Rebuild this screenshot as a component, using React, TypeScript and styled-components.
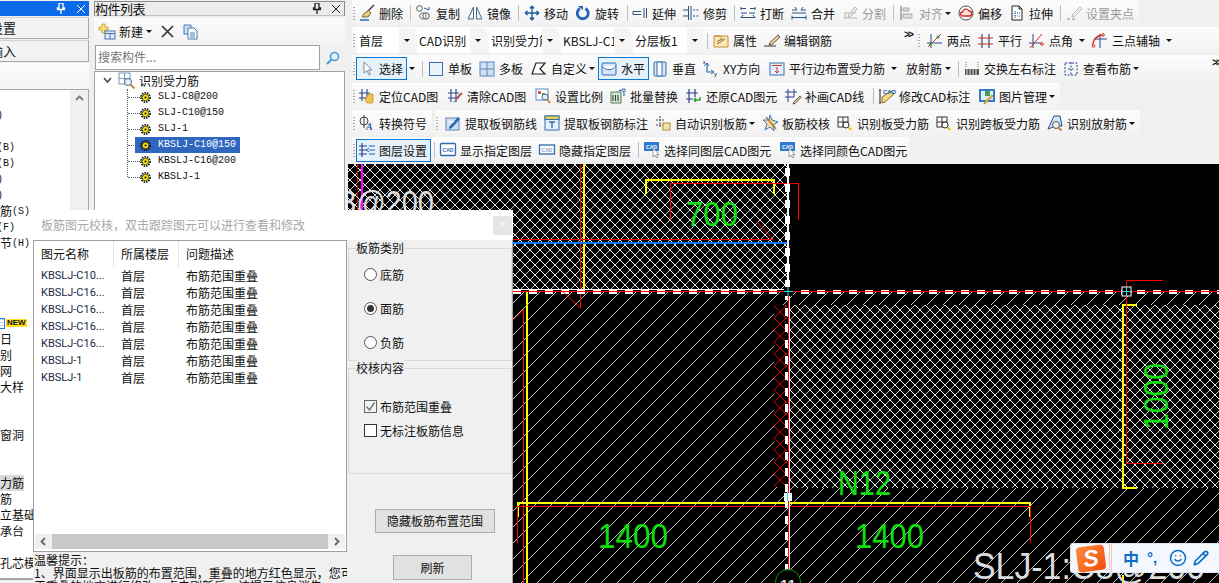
import React from 'react';
import styled, { createGlobalStyle } from 'styled-components';
import { Smile, Pencil } from 'lucide-react';

const Global = createGlobalStyle`
  html, body { margin: 0; padding: 0; background: #f0f0f0; overflow: hidden; }
  body { font-family: "Noto Sans CJK SC", "Noto Sans", sans-serif; font-size: 12px; color: #111; }
  * { box-sizing: border-box; }
`;

const Page = styled.div`
  position: relative; width: 1219px; height: 583px; overflow: hidden;
  display: flex; background: #f0f0f0;
`;

/* ---------- left dock ---------- */
const LeftDock = styled.div`
  width: 89px; height: 580px; margin-right: 5px; flex: none; display: flex; flex-direction: column;
  padding-top: 1px; border-bottom: 1px solid #a0a0a0;
`;
const BlueHead = styled.div`
  height: 15px; background: #0a6ae8; display: flex; align-items: center; justify-content: flex-end;
  gap: 10px; padding-right: 3px; color: #fff; flex: none;
`;
const DockTab = styled.div<{ $shift: number }>`
  height: 22px; margin-top: 1px; border-bottom: 1px solid #a8a8a8; border-right: 1px solid #a8a8a8;
  border-top: 1px solid #d0d0d0; background: #f2f2f2; font-size: 13px; line-height: 20px;
  overflow: hidden; white-space: nowrap; text-indent: ${p => p.$shift}px; flex: none;
`;
const DockStrip = styled.div`
  height: 26px; margin-top: 1px; background: linear-gradient(#fdfdfd, #f4f4f4); flex: none;
`;
const DockBody = styled.div`
  flex: 1; display: flex; background: #fff; border: 1px solid #a8a8a8; border-left: none; overflow: hidden;
`;
const DockRows = styled.div`
  flex: 1; padding-top: 17px; overflow: hidden;
`;
const DockRow = styled.div<{ $hi?: boolean }>`
  height: 16px; line-height: 16px; white-space: nowrap; font-size: 12px; width: fit-content;
  display: flex; align-items: center; background: ${p => (p.$hi ? '#d9d9d9' : 'transparent')};
`;
const Ascii = styled.span`
  font-family: "Liberation Mono", monospace; font-size: 10px; position: relative; top: 1px;
`;
const LeadAscii = styled(Ascii)`
  margin-left: -3px;
`;
const NewBadge = styled.span`
  background: #ffdc1e; color: #111; font: bold 8px/8px "Liberation Sans", sans-serif; padding: 0 1px; margin-left: 1px;
`;
const MiniList = styled.span`
  width: 5px; height: 11px; border: 1px solid #2b7bd6; border-left: none; display: inline-block;
  background: repeating-linear-gradient(#bcd8f5 0 1px, #fff 1px 3px);
`;
const DockScroll = styled.div`
  width: 18px; flex: none; background: #f0f0f0; display: flex; justify-content: center; padding-top: 4px; color: #777;
`;

/* ---------- component list ---------- */
const ListDock = styled.div`
  width: 251px; margin-right: 3px; flex: none; display: flex; flex-direction: column; padding-top: 1px;
`;
const ListHead = styled.div`
  height: 15px; border: 1px solid #8a8a8a; border-bottom-color: #c0c0c0; background: #ececec; display: flex; align-items: center; flex: none;
  font-size: 13px; line-height: 13px; letter-spacing: -0.5px;
`;
const ListTitle = styled.span` flex: 1; `;
const HeadBtns = styled.span`
  display: flex; gap: 9px; padding-right: 3px; color: #222; align-items: center;
`;
const ListTools = styled.div`
  height: 27px; margin-top: 2px; display: flex; align-items: center; background: linear-gradient(#fbfbfb, #f2f2f2); padding-left: 5px; flex: none;
`;
const NewLabel = styled.span` margin-left: 4px; font-size: 12px; `;
const Caret = styled.span<{ $ml?: number }>`
  width: 0; height: 0; flex: none; margin-left: ${p => p.$ml ?? 2}px;
  border-left: 3px solid transparent; border-right: 3px solid transparent; border-top: 3px solid #111;
`;
const BarIconGap = styled.span`
  display: flex; margin-left: 9px;
`;
const SearchRow = styled.div`
  height: 25px; display: flex; flex: none; margin-left: 1px;
`;
const SearchBox = styled.div`
  width: 225px; border: 1px solid #a0a0a0; background: #fff; color: #777; font-size: 12px; line-height: 21px; padding-left: 2px;
`;
const SearchBtn = styled.div`
  flex: 1; display: flex; align-items: center; justify-content: center;
`;
const TreeBox = styled.div`
  flex: 1; background: #fff; border: 1px solid #a0a0a0; margin-top: 1px; overflow: hidden;
`;
const RootRow = styled.div`
  height: 17px; display: flex; align-items: center; padding-left: 7px;
`;
const ExpandChev = styled.svg`
  width: 9px; height: 7px; margin: 0 7px 0 1px; flex: none;
`;
const RootLabel = styled.span` margin-left: 4px; font-size: 12px; `;
const TreeItems = styled.div`
  margin-left: 32px; border-left: 1px dotted #666; height: 88px;
`;
const TreeRow = styled.div`
  height: 16px; display: flex; align-items: center;
`;
const Dots = styled.span`
  width: 12px; border-top: 1px dotted #666; flex: none;
`;
const TreeText = styled.span`
  font-family: "Liberation Mono", monospace; font-size: 10px; height: 16px; line-height: 16px; white-space: nowrap; margin-left: 7px;
`;
const Selected = styled.span`
  display: flex; align-items: center; background: #2f66bf; color: #fff; height: 16px; width: 105px; margin-left: -5px; padding-left: 5px;
`;

/* ---------- toolbars ---------- */
const Main = styled.div`
  flex: 1; min-width: 0; display: flex; flex-direction: column;
`;
const ToolRow = styled.div<{ $h: number }>`
  height: ${p => p.$h}px; padding: 0 0 1px 4px; display: flex; gap: 0; flex: none;
`;
const BarBox = styled.div<{ $w: number; $pl: number; $ml: number }>`
  width: ${p => p.$w}px; margin-left: ${p => p.$ml}px; padding-left: ${p => p.$pl}px; display: flex; align-items: center; flex: none;
  background:
    repeating-linear-gradient(#aaa 0 1px, transparent 1px 3px) 1px center / 2px 13px no-repeat,
    linear-gradient(#fcfcfc, #f1f1f1);
`;
const Tool = styled.div<{ $w: number; $dim?: boolean }>`
  width: ${p => p.$w}px; flex: none; display: flex; align-items: center; white-space: nowrap; font-size: 12px;
  color: ${p => (p.$dim ? '#9a9a9a' : '#111')};
`;
const Face = styled.div<{ $bw?: number }>`
  display: flex; align-items: center; height: 23px; flex: none;
  ${p => (p.$bw ? `width:${p.$bw}px;background:#e5f1fb;box-shadow:inset 0 0 0 1px #0a78d2;` : '')}
`;
const IconBox = styled.span<{ $w: number }>`
  width: ${p => p.$w}px; flex: none; display: flex; justify-content: flex-end; padding-right: 4px; height: 16px;
`;
const Sep = styled.span<{ $w: number }>`
  width: ${p => p.$w}px; flex: none; height: 16px; background: linear-gradient(#bdbdbd, #bdbdbd) left / 1px 100% no-repeat;
`;
const Combo = styled.div<{ $w: number }>`
  width: ${p => p.$w}px; flex: none; display: flex;
`;
const ComboFace = styled.div<{ $box: number }>`
  width: ${p => p.$box}px; height: 25px; background: #fff; display: flex; align-items: center; font-size: 12px; padding-left: 2px; overflow: hidden;
`;
const ComboText = styled.span`
  flex: 1; min-width: 0; white-space: nowrap; overflow: hidden;
`;
const ComboDrop = styled.span`
  width: 16px; flex: none; height: 25px; background: #f4f4f4; display: flex; align-items: center; justify-content: center;
`;
const More = styled.span<{ $w: number }>`
  width: ${p => p.$w}px; flex: none; font: bold 10px/12px "Liberation Mono", monospace; letter-spacing: -2px; align-self: flex-start; padding-top: 3px;
`;

/* ---------- canvas ---------- */
const Canvas = styled.svg`
  display: block; width: 871px; height: 419px; background: #000; flex: none;
`;

/* ---------- dialog ---------- */
const Dialog = styled.div`
  position: absolute; left: 33px; top: 210px; width: 480px; height: 373px; display: flex; flex-direction: column; background: #fff; overflow: hidden;
`;
const DlgTitle = styled.div`
  height: 30px; flex: none; background: #fff; display: flex; align-items: center; padding: 0 1px 2px 8px; color: #a8a8a8; font-size: 12px;
`;
const DlgTitleText = styled.span` flex: 1; `;
const CloseBtn = styled.span`
  width: 19px; height: 19px; margin-top: 2px; background: #e5e5e5; color: #fff; text-align: center; font: 12px/18px "Liberation Sans", sans-serif;
`;
const DlgBody = styled.div`
  flex: 1; min-height: 0; display: flex; background: #f0f0f0;
`;
const DlgLeft = styled.div`
  width: 314px; flex: none; display: flex; flex-direction: column; min-height: 0;
`;
const TableBox = styled.div`
  height: 312px; flex: none; border: 1px solid #a0a0a0; background: #fff; display: flex; flex-direction: column;
`;
const TableArea = styled.div` flex: 1; min-height: 0; `;
const THead = styled.div`
  display: grid; grid-template-columns: 80px 65px 1fr; height: 26px; align-items: stretch;
`;
const TH = styled.div`
  padding-left: 7px; line-height: 26px; font-size: 12px; border-right: 1px solid #e6e6e6;
  &:last-child { border-right: none; }
`;
const TRow = styled.div`
  display: grid; grid-template-columns: 80px 65px 1fr; height: 17px; align-items: center; font-size: 12px;
`;
const TName = styled.div`
  padding-left: 7px; font: 11px/17px "Roboto", "Liberation Sans", sans-serif; color: #1b2a44; white-space: nowrap; overflow: hidden;
`;
const TCell = styled.div` padding-left: 7px; line-height: 17px; white-space: nowrap; `;
const HScroll = styled.div`
  height: 15px; margin: 0 1px 2px 1px; display: flex; background: #f0f0f0; align-items: stretch; flex: none;
`;
const ScrollArrow = styled.span`
  width: 17px; flex: none; display: flex; align-items: center; justify-content: center; color: #666;
`;
const ScrollThumb = styled.span` flex: 1; background: #c8c8c8; `;
const Tips = styled.div`
  flex: 1; min-height: 0; overflow: hidden; padding: 1px 0 0 1px; font-size: 12px; line-height: 13px; white-space: nowrap; background: #f0f0f0;
`;
const DlgRight = styled.div`
  flex: 1; padding: 8px 0 0 1px; border-right: 1px solid #a6a6a6; display: flex; flex-direction: column; min-width: 0;
`;
const Group = styled.div<{ $h: number; $mt?: number }>`
  height: ${p => p.$h}px; margin-top: ${p => p.$mt ?? 0}px; border: 1px solid #d9d9d9; flex: none;
`;
const Legend = styled.div`
  width: fit-content; margin: -9px 0 0 7px; height: 16px; line-height: 16px; background: #f0f0f0; font-size: 12px;
`;
const RadioList = styled.div`
  display: flex; flex-direction: column; gap: 17px; padding: 10px 0 0 15px;
`;
const CheckList = styled.div`
  display: flex; flex-direction: column; gap: 7px; padding: 22px 0 0 15px;
`;
const Opt = styled.label`
  display: flex; align-items: center; gap: 3px; height: 17px; font-size: 12px;
`;
const Radio = styled.span<{ $on?: boolean }>`
  width: 13px; height: 13px; border-radius: 50%; border: 1px solid #555; background: #fff; display: flex; align-items: center; justify-content: center; flex: none;
  &::after { content: ''; width: 7px; height: 7px; border-radius: 50%; background: ${p => (p.$on ? '#333' : 'transparent')}; }
`;
const Check = styled.span<{ $on?: boolean }>`
  width: 13px; height: 13px; border: 1px solid ${p => (p.$on ? '#666' : '#333')}; background: ${p => (p.$on ? '#f4f4f4' : '#fff')}; display: flex; align-items: center; justify-content: center; flex: none;
`;
const PushBtn = styled.div<{ $w: number; $h: number; $ml: number; $mt: number }>`
  width: ${p => p.$w}px; height: ${p => p.$h}px; margin: ${p => p.$mt}px 0 0 ${p => p.$ml}px; flex: none;
  background: #e1e1e1; border: 1px solid #adadad; text-align: center; line-height: ${p => p.$h - 2}px; font-size: 12px;
`;

/* ---------- IME ---------- */
const Ime = styled.div`
  position: absolute; left: 1070px; top: 543px; right: 0; height: 30px; background: #f4f8fe; border: 1px solid #d8e4f2; border-right: none;
  border-radius: 3px 0 0 3px; display: flex; align-items: center; color: #0a6fc4;
`;
const ImeLogo = styled.span`
  width: 28px; height: 25px; margin-left: 6px; background: linear-gradient(135deg, #ff8a3a, #f04e12); border-radius: 4px; transform: rotate(-7deg);
  color: #fff; font: italic bold 23px/25px "Liberation Sans", sans-serif; text-align: center; flex: none;
`;
const ImeRule = styled.span` width: 3px; height: 28px; margin-left: 4px; border-left: 1px solid #f3c9b6; border-right: 1px solid #f3c9b6; flex: none; `;
const ImeZh = styled.span` margin-left: 11px; font-size: 16px; font-weight: 700; line-height: 28px; flex: none; `;
const ImePunct = styled.span` margin-left: 8px; font: bold 15px/22px "Liberation Sans", sans-serif; width: 22px; flex: none; `;
const ImeIcon = styled.span` display: flex; width: 24px; flex: none; `;

/* ---------- icons ---------- */
const Svg = styled.svg` width: 16px; height: 16px; flex: none; display: block; overflow: visible; `;
const cadLabel = (x: number, y: number, c: string) => (
  <text x={x} y={y} fontSize="6" fontWeight="700" fill={c} fontFamily="Liberation Sans" textLength="11" lengthAdjust="spacingAndGlyphs">CAD</text>
);
const ICONS: Record<string, React.ReactNode> = {
  broom: <><path d="M15 0 8 7" stroke="#3d3d50" strokeWidth="1.5" /><path d="M9.5 5.5l2.5 2.5-3 4H3l2-3.500z" fill="#e6cd7d" stroke="#7d6a3c" /><path d="M1 15h9" stroke="#2b6cb8" strokeWidth="1.5" /></>,
  copy: <><circle cx="3.500" cy="3.500" r="2.800" fill="#fff" stroke="#555" /><circle cx="10" cy="11" r="3.200" fill="#fff" stroke="#555" /><circle cx="7" cy="11" r="3.200" fill="none" stroke="#777" /><path d="M8 3l5 2M13 5V2" stroke="#3a6aa8" fill="none" /></>,
  mirror: <><path d="M6.500 2 1 14h5.500zM9.500 2 15 14H9.500z" fill="#eef3fa" stroke="#4a6a8c" /></>,
  move: <path d="M8 1v14M1 8h14M8 1 6 3.500M8 1l2 2.500M8 15l-2-2.500M8 15l2-2.500M1 8l2.500-2M1 8l2.500 2M15 8l-2.500-2M15 8l-2.500 2" stroke="#1f5b9e" strokeWidth="1.400" fill="none" />,
  rotate: <><path d="M5 3.500a5.500 5.500 0 1 0 5.500 0" stroke="#2264bc" strokeWidth="2.800" fill="none" /><path d="M3 1h5v4z" fill="#2264bc" /></>,
  extend: <path d="M1 6.500h8M1 9.500h8M1 6.500v3M12 3v10M14.500 3v10" stroke="#2c4f80" fill="none" />,
  trim: <path d="M5.500 1v14M8 1v14M0 5h5.500M0 11h5.500M10 5h2M13.500 5h2M10 11h2M13.500 11h2" stroke="#2c4f80" fill="none" />,
  brk: <path d="M1 5V2M1 3.500h5M10 3.500h5M15 5V2M1 8h6M9 8h6M1 12.500h14M3 10l-2 2.500M13 10l2 2.500" stroke="#27527f" fill="none" />,
  merge: <path d="M1 5h5M10 5h5M4 2l2 3M12 2l-2 3M1 8h14M1 12.500h14M1 10.500v4M15 10.500v4" stroke="#27527f" fill="none" />,
  split: <path d="M1 13h14M2 8h12M3 8v5M13 2 7 9l-1 3 3-1 6-7z" stroke="#b8b8b8" fill="#eee" />,
  align: <><path d="M2 1v14" stroke="#999" strokeWidth="1.500" /><path d="M4 3h6v3H4zM4 9h9v4H4z" fill="#ddd" stroke="#aaa" /></>,
  offset: <><circle cx="8" cy="8" r="7" fill="#fff" stroke="#4a4a4a" /><path d="M4.500 11a2 2 0 0 1 0-4 3.500 3.500 0 0 1 6.500-1 2.500 2.500 0 0 1 .5 5z" fill="#fbe2dc" stroke="#d42a1c" strokeWidth="1.300" /></>,
  stretch: <><path d="M3 1h7l3 3v11H3z" fill="#fff" stroke="#222" /><path d="M10 1v3h3" fill="none" stroke="#222" /><path d="M6 6v7M6 8h5M6 11h5" stroke="#1f5b9e" strokeDasharray="1 1" /></>,
  gripp: <><path d="M14 2 7 9l-1 3 3-1 7-7z" fill="#eee" stroke="#bbb" /><path d="M1 14h3M6 14h3" stroke="#aaa" strokeWidth="1.500" /></>,
  attr: <><path d="M1 3h14v11H1z" fill="#fbe8b4" stroke="#c88a3a" /><path d="M1 3h6l1 2" fill="none" stroke="#c88a3a" /><path d="M4 11l8-5M4 8.500l6-3" stroke="#7a6a40" /></>,
  edit: <><path d="M14 2 6 9.500l-1 2.500 3-.5 8-7.500z" fill="#f2d98a" stroke="#555" /><path d="M0 13h12" stroke="#333" /></>,
  two: <><path d="M4 1v14M0 10h15" stroke="#274b8a" /><path d="M1 14 14 1" stroke="#d42a1c" /><circle cx="3.500" cy="11" r="1.500" fill="#3a9a3a" /><circle cx="11" cy="4" r="1.500" fill="#3a9a3a" /></>,
  par: <><path d="M4 1v14M11 1v14" stroke="#274b8a" strokeWidth="1.200" /><path d="M0 5h15M0 11h15" stroke="#d42a1c" strokeWidth="1.200" /></>,
  pang: <><path d="M4 1v14M0 10h12" stroke="#274b8a" /><path d="M1 15 13 1" stroke="#d42a1c" /><circle cx="13" cy="11" r="1.300" fill="none" stroke="#d42a1c" /></>,
  arc: <><path d="M8 1v14M2 6h13" stroke="#274b8a" /><path d="M1 13A10 10 0 0 1 11 2" fill="none" stroke="#d42a1c" strokeWidth="1.300" /><circle cx="1.500" cy="13" r="1.300" fill="#fff" stroke="#d42a1c" /><circle cx="11" cy="2" r="1.300" fill="#fff" stroke="#d42a1c" /></>,
  cursor: <path d="M5 1v11l3-2.500 2 4.500 1.500-.8-2-4.300h3.500z" fill="#fff" stroke="#8a8a96" />,
  single: <rect x="1.500" y="1.500" width="13" height="13" fill="#eaf2fb" stroke="#3a6fb0" />,
  multi: <><rect x="1" y="1" width="14" height="14" fill="#cfe0f4" stroke="#5a88bc" /><path d="M8 1v14M1 8h14" stroke="#5a88bc" /></>,
  custom: <path d="M1 13 5 2h9L9 8l5 5z" fill="#fff" stroke="#222" strokeWidth="1.200" />,
  horiz: <><rect x="1" y="2" width="14" height="12" rx="1" fill="#d6e6f6" stroke="#2f6cb0" /><path d="M1 5c4 5 10 5 14 0" fill="#fff" stroke="#2f6cb0" /></>,
  vert: <><rect x="2" y="1" width="12" height="14" rx="1" fill="#d6e6f6" stroke="#2f6cb0" /><path d="M5 1h5v14H5z" fill="#fff" stroke="#2f6cb0" /></>,
  xy: <><path d="M4 2v9h6" stroke="#2f6cb0" fill="none" strokeWidth="1.200" /><path d="M1 5l3-3 2 3M8 9l3 2-3 2" stroke="#2f6cb0" fill="none" /><text x="11" y="15" fontSize="6" fontFamily="Liberation Sans">y</text><text x="0" y="3" fontSize="5" fontFamily="Liberation Sans">x</text></>,
  pedge: <><rect x="1" y="2" width="14" height="12" fill="#e6f0fa" stroke="#3a6fb0" /><path d="M3 4.500h10M8 6v6M6 10l2 2 2-2" stroke="#c03a2a" fill="none" /></>,
  swap: <><path d="M1 8h14v6H1z" fill="#555" /><path d="M3 8v6M6 8v6M9 8v6M12 8v6" stroke="#ddd" /><path d="M2 6V1M14 6V1" stroke="#777" strokeDasharray="1 1" /></>,
  view: <path d="M2 2h12v12H2z M8 1v14 M5 8h6" stroke="#1f3c8a" fill="none" strokeDasharray="2 1.500" />,
  locate: <><path d="M3 1v12M8 1v12M0 5h11M0 10h11" stroke="#27428a" strokeWidth="1.100" /><path d="M9 6h5v8a1 1 0 0 1-1 1H8l-2-3z" fill="#f2c24a" stroke="#a07a20" strokeWidth=".6" /></>,
  clear: <><path d="M4 1v13M9 1v13M1 5h11M1 10h11" stroke="#27428a" strokeWidth="1.100" /><path d="M15 5 9 11" stroke="#c05050" strokeWidth="2" /><path d="M9 11l-3 4 4-2z" fill="#777" /></>,
  scale: <><rect x="1" y="1" width="12" height="11" fill="#fff" stroke="#5a88bc" /><rect x="3" y="3" width="3" height="3" fill="#d9544a" /><rect x="7" y="5" width="3" height="3" fill="#4aa04a" /><circle cx="10" cy="9" r="3" fill="#dfeefb" stroke="#4a6a8c" /><path d="M12 11l3 4" stroke="#c88a3a" strokeWidth="2" /></>,
  batch: <><path d="M1 4h10v11H1z" fill="#cfe6cf" stroke="#5a7a5a" /><path d="M3 7v6M5.500 7v6M8 7v6" stroke="#333" /><path d="M9 3a3 3 0 0 1 5 2v3" fill="none" stroke="#2f6cb0" strokeWidth="1.200" /><path d="M12 1h3v3" stroke="#2f6cb0" fill="none" /></>,
  restore: <><path d="M3 1v14M9 1v8M0 5h12M0 11h7" stroke="#27428a" strokeWidth="1.200" /><path d="M8 12h6v-3M8 12l2-2M8 12l2 2" stroke="#2a9a3a" fill="none" strokeWidth="1.400" /></>,
  draw: <><path d="M3 1v13M9 1v8M0 4h12M0 9h9" stroke="#27428a" /><path d="M15 8 9 14l-1 2 2-.5 6-6z" fill="#f2d98a" stroke="#555" /></>,
  modcad: <><path d="M1 2v13M0 2h2M0 15h2" stroke="#222" /><path d="M3 9l9-6 3 3-9 8-3 1z" fill="#f2d98a" stroke="#8a6a20" /><text x="4" y="6" fontSize="6" fontWeight="700" fill="#1f5bb0" fontFamily="Liberation Sans">CAD</text></>,
  image: <><rect x="0" y="1" width="16" height="13" fill="#3a78c8" /><rect x="2" y="3" width="12" height="9" fill="#dcefff" /><path d="M6 3h5v5H6z" fill="#4aa04a" /><path d="M14 8 7 15l-2 1 1-3 7-6z" fill="#f2c24a" stroke="#8a6a20" strokeWidth=".6" /></>,
  symbol: <><circle cx="5" cy="6" r="4" fill="none" stroke="#444" /><path d="M5 0v13" stroke="#444" /><text x="7" y="15" fontSize="10" fontWeight="700" fontStyle="italic" fill="#2f5fb0" fontFamily="Liberation Serif">A</text></>,
  pickline: <><rect x="1" y="3" width="13" height="12" fill="#cfe0f4" stroke="#5a88bc" /><path d="M4 12 13 2l2 2-8 9-3 1z" fill="#2f6cb0" /><path d="M3 7h6" stroke="#fff" /></>,
  picklabel: <><rect x="1" y="1" width="14" height="14" fill="#e6f0fa" stroke="#2f6cb0" /><rect x="1" y="1" width="14" height="3.500" fill="#f2d24a" stroke="#2f6cb0" /><path d="M5 7h6M8 7v6" stroke="#2f6cb0" strokeWidth="1.400" /></>,
  auto: <><path d="M1 5h8M1 10h8M5 1v12" stroke="#444" strokeDasharray="2 1" /><rect x="8" y="8" width="7" height="7" fill="#f3e3b0" stroke="#b08a30" /></>,
  star: <><path d="M8 0l2 5 6 2-5 3 1 6-4-4-5 3 2-6-4-4 6 0z" fill="#f6dd9a" stroke="#3a78c8" /><path d="M4 2l10 12" stroke="#b07a30" strokeWidth="1.500" /></>,
  recog: <><rect x="1" y="2" width="10" height="10" fill="#fff" stroke="#333" /><path d="M6 2v10M1 7h10" stroke="#333" /><circle cx="9" cy="10" r="3" fill="#fff" stroke="#333" /><path d="M11.500 12.500l3 2.500" stroke="#e0c020" strokeWidth="2" /></>,
  radial: <><path d="M1 14 7 1h6l2 10H9z" fill="#d6e6f6" stroke="#274b8a" /><circle cx="9" cy="10" r="3.500" fill="#eee" stroke="#555" /><path d="M11.500 12.500l3 3" stroke="#c88a3a" strokeWidth="2" /></>,
  layer: <><path d="M3 1v14M0 4h8M0 8h8M0 12h8" stroke="#27428a" strokeWidth="1.200" /><path d="M10 4h6M10 8h6M10 12h6M7 8l3-2M7 8l3 2" stroke="#1f5bb0" fill="none" /></>,
  cad: <><rect x=".5" y="1.500" width="15" height="12" rx="1" fill="#fff" stroke="#2f6cb0" strokeWidth="1.300" />{cadLabel(2.500, 10, '#2f6cb0')}</>,
  cad2: <><rect x=".5" y="3" width="15" height="9" fill="#fff" stroke="#2f6cb0" strokeWidth="1.300" />{cadLabel(2.500, 9.500, '#8aa4c4')}</>,
  cadsel: <><rect x="0" y="0" width="15" height="9" fill="#2f7ad0" />{cadLabel(2, 6.800, '#fff')}<path d="M9 6v9l2-2 1.500 3 1.500-.8-1.500-2.700h2.500z" fill="#fff" stroke="#777" strokeWidth=".7" /></>,
  gear: <><circle cx="5.500" cy="5.500" r="4.600" fill="none" stroke="#111" strokeWidth="1.700" strokeDasharray="1.500 1" /><circle cx="5.500" cy="5.500" r="3.300" fill="#ffe600" stroke="#111" strokeWidth=".7" /><circle cx="5.500" cy="5.500" r="1.100" fill="#111" /></>,
};
const Icon = ({ n }: { n: string }) => <Svg viewBox="0 0 16 16">{ICONS[n]}</Svg>;
const TreeIcon = styled.svg` width: 11px; height: 11px; flex: none; display: block; `;

/* ---------- data ---------- */
type Item = {
  s: number; tx?: number; icon?: string; label?: string; dim?: boolean; caret?: number;
  sep?: boolean; combo?: number; more?: boolean; bw?: number;
};
const T = (tx: number, icon: string, label: string, o: Partial<Item> = {}): Item => ({ s: tx - 20, tx, icon, label, ...o });
const Sp = (s: number): Item => ({ s, sep: true });
const C = (s: number, combo: number, label: string): Item => ({ s, combo, label });
const M = (s: number): Item => ({ s, more: true });

type BarDef = { x: number; end: number; items: Item[] };
const ROWS: { h: number; bars: BarDef[] }[] = [
  { h: 27, bars: [{ x: 352, end: 1139, items: [
    T(379, 'broom', '删除'), Sp(410), T(436, 'copy', '复制'), T(487, 'mirror', '镜像'), Sp(518), T(544, 'move', '移动'), T(595, 'rotate', '旋转'), Sp(627),
    T(652, 'extend', '延伸'), T(703, 'trim', '修剪'), Sp(734), T(760, 'brk', '打断'), T(811, 'merge', '合并'), T(862, 'split', '分割', { dim: true }), Sp(893),
    T(919, 'align', '对齐', { dim: true, caret: 2 }), T(978, 'offset', '偏移'), T(1029, 'stretch', '拉伸'), Sp(1060), T(1086, 'gripp', '设置夹点', { dim: true }),
  ] }] },
  { h: 28, bars: [{ x: 352, end: 915, items: [
    C(357, 58, '首层'), C(417, 69, 'CAD识别'), C(489, 69, '识别受力筋'), C(561, 69, 'KBSLJ-C10@150'), C(633, 70, '分层板1'), Sp(707),
    T(733, 'attr', '属性'), T(784, 'edit', '编辑钢筋'), M(904),
  ] }, { x: 917, end: 1219, items: [
    T(947, 'two', '两点'), T(998, 'par', '平行'), T(1049, 'pang', '点角', { caret: 6 }), T(1112, 'arc', '三点辅轴', { caret: 6 }),
  ] }] },
  { h: 28, bars: [{ x: 352, end: 1219, items: [
    T(379, 'cursor', '选择', { s: 356, bw: 51, caret: 2 }), Sp(422), T(448, 'single', '单板'), T(499, 'multi', '多板'), T(551, 'custom', '自定义', { caret: 2 }),
    T(621, 'horiz', '水平', { s: 598, bw: 51 }), T(672, 'vert', '垂直'), T(723, 'xy', 'XY方向'), T(789, 'pedge', '平行边布置受力筋', { caret: 6 }),
    { s: 906, tx: 906, label: '放射筋', caret: 3 }, Sp(958), T(984, 'swap', '交换左右标注'), T(1083, 'view', '查看布筋', { caret: 2 }), M(1212),
  ] }] },
  { h: 27, bars: [{ x: 352, end: 1060, items: [
    T(379, 'locate', '定位CAD图'), T(467, 'clear', '清除CAD图'), T(555, 'scale', '设置比例'), T(630, 'batch', '批量替换'), T(706, 'restore', '还原CAD图元'),
    T(805, 'draw', '补画CAD线'), Sp(873), T(899, 'modcad', '修改CAD标注'), T(999, 'image', '图片管理', { caret: 2 }),
  ] }] },
  { h: 27, bars: [{ x: 352, end: 432, items: [T(379, 'symbol', '转换符号')] }, { x: 435, end: 1140, items: [
    T(465, 'pickline', '提取板钢筋线'), T(564, 'picklabel', '提取板钢筋标注'), T(675, 'auto', '自动识别板筋', { caret: 2 }), T(782, 'star', '板筋校核'),
    T(857, 'recog', '识别板受力筋'), T(956, 'recog', '识别跨板受力筋'), T(1067, 'radial', '识别放射筋', { caret: 2 }),
  ] }] },
  { h: 27, bars: [{ x: 352, end: 909, items: [
    T(379, 'layer', '图层设置', { s: 356, bw: 75 }), Sp(434), T(460, 'cad', '显示指定图层'), T(559, 'cad2', '隐藏指定图层'), Sp(638),
    T(664, 'cadsel', '选择同图层CAD图元'), T(800, 'cadsel', '选择同颜色CAD图元'),
  ] }] },
];

const Bar = ({ def, prevEnd }: { def: BarDef; prevEnd: number }) => (
  <BarBox $w={def.end - def.x} $pl={def.items[0].s - def.x} $ml={def.x - prevEnd}>
    {def.items.map((it, i) => {
      const w = (def.items[i + 1]?.s ?? def.end) - it.s;
      if (it.sep) return <Sep key={i} $w={w} />;
      if (it.more) return <More key={i} $w={w}>&gt;&gt;</More>;
      if (it.combo) return (
        <Combo key={i} $w={w}>
          <ComboFace $box={it.combo}><ComboText>{it.label}</ComboText><ComboDrop><Caret $ml={0} /></ComboDrop></ComboFace>
        </Combo>
      );
      return (
        <Tool key={i} $w={w} $dim={it.dim}>
          <Face $bw={it.bw}>
            {it.icon && <IconBox $w={it.tx! - it.s}><Icon n={it.icon} /></IconBox>}
            <span>{it.label}</span>
          </Face>
          {it.caret !== undefined && <Caret $ml={it.caret} />}
        </Tool>
      );
    })}
  </BarBox>
);

const PinIcon = ({ c = 'currentColor' }: { c?: string }) => (
  <svg width="10" height="11" viewBox="0 0 10 11"><path d="M3 0h4v5h1.500v1.500h-7V5H3zM5 6.500V11" fill="none" stroke={c} strokeWidth="1.300" /></svg>
);
const XIcon = ({ c = 'currentColor' }: { c?: string }) => (
  <svg width="10" height="10" viewBox="0 0 10 10"><path d="M1 1l8 8M9 1l-8 8" stroke={c} /></svg>
);
const Chev = ({ d }: { d: 'up' | 'left' | 'right' }) => (
  <svg width="9" height="9" viewBox="0 0 9 9">
    <path d={d === 'up' ? 'M1 6l3.500-3.500L8 6' : d === 'left' ? 'M6 1 2.500 4.500 6 8' : 'M3 1l3.500 3.500L3 8'} fill="none" stroke="currentColor" strokeWidth="1.800" />
  </svg>
);

const DOCK: (React.ReactNode | null)[] = [
  <LeadAscii>)</LeadAscii>, null, <LeadAscii>(B)</LeadAscii>, <LeadAscii>(B)</LeadAscii>, <LeadAscii>)</LeadAscii>, <LeadAscii>)</LeadAscii>,
  <>筋<Ascii>(S)</Ascii></>, <LeadAscii>(F)</LeadAscii>, <>节<Ascii>(H)</Ascii></>, null, null, null, null,
  <><MiniList /><NewBadge>NEW</NewBadge></>, '日', '别', '网', '大样', null, null, '窗洞', null, null,
  '力筋', '筋', '立基础', '承台', null, '孔芯模',
];
const TREE = ['SLJ-C8@200', 'SLJ-C10@150', 'SLJ-1', 'KBSLJ-C10@150', 'KBSLJ-C16@200', 'KBSLJ-1'];
const NAMES = ['KBSLJ-C10...', 'KBSLJ-C16...', 'KBSLJ-C16...', 'KBSLJ-C16...', 'KBSLJ-C16...', 'KBSLJ-1', 'KBSLJ-1'];
const COMMA = '\uFF0C';
const COLON = '\uFF1A';

const Gear = () => <TreeIcon viewBox="0 0 11 11">{ICONS.gear}</TreeIcon>;

const CadDrawing = () => (
  <Canvas viewBox="348 164 871 419">
    <defs>
      <pattern id="cross" width="10" height="10" patternUnits="userSpaceOnUse">
        <path d="M0 10 10 0" stroke="#c8c8c8" strokeWidth="1" shapeRendering="crispEdges" />
        <path d="M0 0 10 10" stroke="#fff" strokeWidth="1" shapeRendering="crispEdges" />
      </pattern>
      <pattern id="crossRed" width="12" height="12" patternUnits="userSpaceOnUse">
        <path d="M0 12 12 0M0 0 12 12" stroke="#ff0000" strokeWidth=".8" />
      </pattern>
      <pattern id="diag" width="16" height="16" patternUnits="userSpaceOnUse">
        <path d="M0 16 16 0" stroke="#c4c4c4" strokeWidth="1" shapeRendering="crispEdges" />
      </pattern>
    </defs>
    <rect x="348" y="164" width="441" height="126" fill="url(#cross)" />
    <rect x="348" y="292" width="871" height="291" fill="url(#diag)" />
    <rect x="790" y="305" width="429" height="183" fill="#000" />
    <rect x="790" y="305" width="429" height="183" fill="url(#cross)" />
    <rect x="774" y="305" width="13" height="182" fill="#000" />
    <rect x="774" y="305" width="13" height="182" fill="url(#crossRed)" />

    <g fill="none" shapeRendering="crispEdges">
      <path d="M361.500 164v46" stroke="#ff00ff" strokeWidth="2" />
      <path d="M357.500 164v46" stroke="#ff0000" strokeDasharray="5 2" />
      <path d="M584 164v127" stroke="#ffff00" strokeWidth="2" />
      <path d="M580.500 164v144" stroke="#ff0000" />
      <path d="M513 239.500h260" stroke="#ff0000" />
      <path d="M513 243h274" stroke="#0a78ff" strokeWidth="2" />
      <path d="M646 194v-14h128v14" stroke="#ffff00" strokeWidth="2" />
      <path d="M670.500 220v-37h128v37" stroke="#ff0000" />
      <path d="M527 292v291" stroke="#ffff00" strokeWidth="2" />
      <path d="M523.500 310v273" stroke="#ff0000" />
      <path d="M518 517v-14h512v14" stroke="#ffff00" strokeWidth="2" />
      <path d="M517.500 543v-37h513v37" stroke="#ff0000" />
      <path d="M1123 575v8" stroke="#ffff00" strokeWidth="2" />
      <path d="M1137 305h-14v183h14" stroke="#ffff00" strokeWidth="2" />
      <path d="M1163 280.500h-36.500v183h36.500" stroke="#ff0000" />
      <path d="M787.500 164v128" stroke="#fff" strokeWidth="2" />
      <path d="M787 168v124" stroke="#fff" strokeWidth="5" strokeDasharray="8 8" />
      <path d="M513 289.500h275" stroke="#fff" />
      <path d="M513 292h706" stroke="#fff" strokeWidth="4" strokeDasharray="8 8" />
      <path d="M513 291.500h706" stroke="#ff0000" />
      <path d="M789 292v291" stroke="#fff" strokeWidth="1" />
      <path d="M786 292v291" stroke="#fff" strokeWidth="3" strokeDasharray="8 8" />
      <path d="M788 292v291" stroke="#ff0000" />
    </g>
    <path d="M756.500 221.500 773 239M561.500 290.500 580.500 308M513 320l10.500-10" stroke="#ff0000" fill="none" />
    <rect x="784" y="287" width="9" height="9" fill="#000" />
    <path d="M784 291.500h9M788 287v9" stroke="#28e0e0" />
    <rect x="1122" y="287" width="9" height="9" fill="#000" stroke="#fff" />
    <path d="M1122 291.500h9M1126.500 287v9" stroke="#28e0e0" />
    <rect x="784" y="493" width="8" height="8" fill="#fff" />
    <path d="M787.500 493v8" stroke="#28e0e0" />
    <circle cx="788" cy="582" r="12.500" fill="#000" stroke="#0a9a0a" />
    <g fontFamily="Liberation Sans, sans-serif">
      <text x="340" y="214" fontSize="33" fill="#dcdcdc" textLength="94" lengthAdjust="spacingAndGlyphs">3@200</text>
      <g fill="#0ee00e">
        <text x="686" y="226" fontSize="35" textLength="52" lengthAdjust="spacingAndGlyphs">700</text>
        <text x="838" y="495" fontSize="35" textLength="53" lengthAdjust="spacingAndGlyphs">N12</text>
        <text x="598" y="548" fontSize="35" textLength="70" lengthAdjust="spacingAndGlyphs">1400</text>
        <text x="855" y="548" fontSize="35" textLength="69" lengthAdjust="spacingAndGlyphs">1400</text>
        <text transform="translate(1168 430) rotate(-90)" fontSize="35" textLength="67" lengthAdjust="spacingAndGlyphs">1000</text>
      </g>
      <text x="973" y="579" fontSize="36" fill="#dcdcdc" textLength="232" lengthAdjust="spacingAndGlyphs">SLJ-1:C8@200</text>
      <text x="788" y="590" textAnchor="middle" fontSize="15" fontWeight="700" fill="#ddd">11</text>
    </g>
  </Canvas>
);

export default function App() {
  return (
    <Page>
      <Global />
      <LeftDock>
        <BlueHead><PinIcon /><XIcon /></BlueHead>
        <DockTab $shift={-10}>设置</DockTab>
        <DockTab $shift={-10}>输入</DockTab>
        <DockStrip />
        <DockBody>
          <DockRows>
            {DOCK.map((d, i) => <DockRow key={i} $hi={i === 23}>{d}</DockRow>)}
          </DockRows>
          <DockScroll><Chev d="up" /></DockScroll>
        </DockBody>
      </LeftDock>

      <ListDock>
        <ListHead>
          <ListTitle>构件列表</ListTitle>
          <HeadBtns><PinIcon /><XIcon /></HeadBtns>
        </ListHead>
        <ListTools>
          <Svg viewBox="0 0 16 16">
            <path d="M3 0h3v3h3v3H6v3H3V6H0V3h3z" fill="#ffe27a" stroke="#b08a20" strokeWidth=".7" />
            <rect x="6" y="7" width="10" height="8" fill="#dfeaf6" stroke="#4a78b0" />
            <path d="M6 9.500h10M11 9.500V15" stroke="#4a78b0" />
          </Svg>
          <NewLabel>新建</NewLabel>
          <Caret $ml={3} />
          <BarIconGap>
            <svg width="13" height="13" viewBox="0 0 13 13"><path d="M1 1l11 11M12 1 1 12" stroke="#333" strokeWidth="1.700" /></svg>
          </BarIconGap>
          <BarIconGap>
            <Svg viewBox="0 0 16 16">
              <path d="M1 1h7v9H1z" fill="#cfe0f4" stroke="#4a78b0" />
              <path d="M5 4h6l3 3v8H5z" fill="#fff" stroke="#4a78b0" />
              <path d="M7 9h5M7 11h5M7 13h5" stroke="#4a78b0" />
            </Svg>
          </BarIconGap>
        </ListTools>
        <SearchRow>
          <SearchBox>搜索构件...</SearchBox>
          <SearchBtn>
            <svg width="14" height="14" viewBox="0 0 14 14"><circle cx="8.500" cy="5.500" r="4" fill="#e4f2fc" stroke="#4a9ad8" strokeWidth="1.600" /><path d="M5.500 8.500 1 13" stroke="#4a9ad8" strokeWidth="2" /></svg>
          </SearchBtn>
        </SearchRow>
        <TreeBox>
          <RootRow>
            <ExpandChev viewBox="0 0 9 7"><path d="M1 1l3.500 4L8 1" fill="none" stroke="#444" strokeWidth="1.500" /></ExpandChev>
            <Svg viewBox="0 0 16 16">
              <rect x="0" y="0" width="11" height="11" fill="#fff" stroke="#7a9ac0" />
              <path d="M5.500 0v11M0 5.500h11" stroke="#7a9ac0" />
              <circle cx="9" cy="9" r="3.500" fill="#e8f2fc" stroke="#5a6a80" />
              <path d="M11.500 11.500l4 4" stroke="#c88a3a" strokeWidth="2" />
            </Svg>
            <RootLabel>识别受力筋</RootLabel>
          </RootRow>
          <TreeItems>
            {TREE.map((t, i) => (
              <TreeRow key={t}>
                <Dots />
                {i === 3 ? (
                  <Selected><Gear /><TreeText>{t}</TreeText></Selected>
                ) : (
                  <><Gear /><TreeText>{t}</TreeText></>
                )}
              </TreeRow>
            ))}
          </TreeItems>
        </TreeBox>
      </ListDock>

      <Main>
        {ROWS.map((r, i) => (
          <ToolRow key={i} $h={r.h}>
            {r.bars.map((b, j) => <Bar key={j} def={b} prevEnd={j === 0 ? 352 : r.bars[j - 1].end} />)}
          </ToolRow>
        ))}
        <CadDrawing />
      </Main>

      <Dialog>
        <DlgTitle>
          <DlgTitleText>{`板筋图元校核${COMMA}双击跟踪图元可以进行查看和修改`}</DlgTitleText>
          <CloseBtn>×</CloseBtn>
        </DlgTitle>
        <DlgBody>
          <DlgLeft>
            <TableBox>
              <TableArea>
                <THead><TH>图元名称</TH><TH>所属楼层</TH><TH>问题描述</TH></THead>
                {NAMES.map((n, i) => (
                  <TRow key={i}><TName>{n}</TName><TCell>首层</TCell><TCell>布筋范围重叠</TCell></TRow>
                ))}
              </TableArea>
              <HScroll>
                <ScrollArrow><Chev d="left" /></ScrollArrow>
                <ScrollThumb />
                <ScrollArrow><Chev d="right" /></ScrollArrow>
              </HScroll>
            </TableBox>
            <Tips>
              {`温馨提示${COLON}`}<br />
              {`1、界面显示出板筋的布置范围${COMMA}重叠的地方红色显示${COMMA}您可`}<br />
              {`于重叠的地方进行修改${COMMA}点击刷新后${COMMA}该提示信息消失`}
            </Tips>
          </DlgLeft>
          <DlgRight>
            <Group $h={113}>
              <Legend>板筋类别</Legend>
              <RadioList>
                <Opt><Radio />底筋</Opt>
                <Opt><Radio $on />面筋</Opt>
                <Opt><Radio />负筋</Opt>
              </RadioList>
            </Group>
            <Group $h={106} $mt={7}>
              <Legend>校核内容</Legend>
              <CheckList>
                <Opt>
                  <Check $on><svg width="11" height="11" viewBox="0 0 11 11"><path d="M1.500 5.500 4.500 9 9.500 1.500" fill="none" stroke="#777" strokeWidth="1.500" /></svg></Check>
                  布筋范围重叠
                </Opt>
                <Opt><Check />无标注板筋信息</Opt>
              </CheckList>
            </Group>
            <PushBtn $w={120} $h={24} $ml={27} $mt={35}>隐藏板筋布置范围</PushBtn>
            <PushBtn $w={79} $h={25} $ml={45} $mt={22}>刷新</PushBtn>
          </DlgRight>
        </DlgBody>
      </Dialog>

      <Ime>
        <ImeLogo>S</ImeLogo>
        <ImeRule />
        <ImeZh>中</ImeZh>
        <ImePunct>°,</ImePunct>
        <ImeIcon><Smile size={18} strokeWidth={2} /></ImeIcon>
        <ImeIcon><Pencil size={16} strokeWidth={2.500} /></ImeIcon>
      </Ime>
    </Page>
  );
}
